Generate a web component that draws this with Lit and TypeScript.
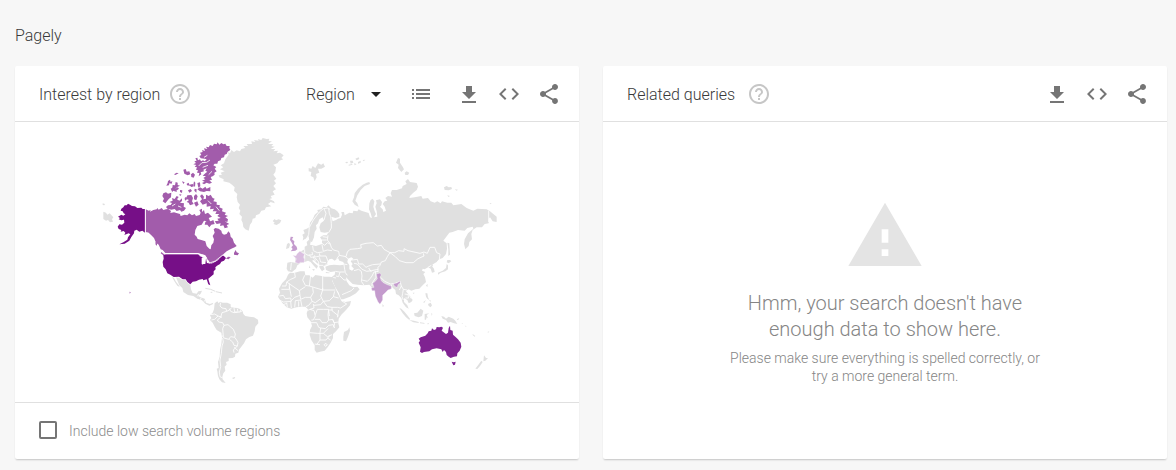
import { LitElement, html, css, svg } from "lit";
import { customElement, property } from "lit/decorators.js";

const ICONS: Record<string, string> = {
  help: "M11 18h2v-2h-2v2zm1-16C6.48 2 2 6.48 2 12s4.48 10 10 10 10-4.48 10-10S17.52 2 12 2zm0 18c-4.41 0-8-3.59-8-8s3.59-8 8-8 8 3.59 8 8-3.59 8-8 8zm0-14c-2.21 0-4 1.79-4 4h2c0-1.1.9-2 2-2s2 .9 2 2c0 2-3 1.75-3 5h2c0-2.25 3-2.5 3-5 0-2.21-1.79-4-4-4z",
  list: "M3 13h2v-2H3v2zm0 4h2v-2H3v2zm0-8h2V7H3v2zm4 4h14v-2H7v2zm0 4h14v-2H7v2zM7 7v2h14V7H7z",
  download: "M19 10h-4V4H9v6H5l7 7 7-7zM5 19v2h14v-2H5z",
  code: "M9.4 16.6L4.8 12l4.6-4.6L8 6l-6 6 6 6 1.4-1.4zm5.2 0l4.6-4.6-4.6-4.6L16 6l6 6-6 6-1.4-1.4z",
  share: "M18 16.08c-.76 0-1.44.3-1.96.77L8.91 12.7c.05-.23.09-.46.09-.7s-.04-.47-.09-.7l7.05-4.11c.54.5 1.25.81 2.04.81 1.66 0 3-1.34 3-3s-1.34-3-3-3-3 1.34-3 3c0 .24.04.47.09.7L8.04 9.81C7.5 9.31 6.79 9 6 9c-1.66 0-3 1.34-3 3s1.34 3 3 3c.79 0 1.5-.31 2.04-.81l7.12 4.16c-.05.21-.08.43-.08.65 0 1.61 1.31 2.92 2.92 2.92s2.92-1.31 2.92-2.92-1.31-2.92-2.92-2.92z",
  warning: "M1 21h22L12 2 1 21zm12-3h-2v-2h2v2zm0-4h-2v-4h2v4z",
};

const icon = (name: string) =>
  html`<svg class="icon" viewBox="0 0 24 24" aria-hidden="true"><path d=${ICONS[name]}></path></svg>`;

@customElement("world-map")
class WorldMap extends LitElement {
  static styles = css`
    :host { display: block; width: 100%; max-width: 426px; }
    svg { display: block; width: 100%; }
    .land { fill: #e0e0e0; }
    .alaska, .usa { fill: #760f87; }
    .canada { fill: #a25cab; }
    .australia { fill: #7f2391; }
    .uk, .india { fill: #c49bcd; }
    .france { fill: #dabfe0; }
    .border { fill: none; stroke: #fff; stroke-width: 2.5; stroke-linejoin: round; }
    .thin { fill: none; stroke: #e0e0e0; stroke-width: 3; }
    .sea { fill: #fff; }
  `;

  render() {
    return html`
      <svg viewBox="-48 0 1278 780" role="img" aria-label="Interest by region, world map">
        ${this.northAmerica()} ${this.southAmerica()} ${this.eurasia()} ${this.africaOceania()}
      </svg>
    `;
  }

  private northAmerica() {
    return svg`
      <path class="alaska" d="M135 237L128 237 124 233 112 234 105 229 96 228 90 224 84 221 80 226 74 226 70 232 64 236 62 242 68 244 71 250 76 253 70 257 64 254 54 260 60 264 56 268 64 271 72 269 73 278 66 284 58 283 53 290 56 297 64 300 62 305 71 303 76 308 73 315 86 310 91 313 84 322 82 329 70 337 58 343 74 341 88 332 94 321 102 310 103 302 110 299 118 305 127 302 135 308Z"/>
      <path class="land" d="M10 245L18 248 22 254 29 250 40 262 36 268 39 275 30 277 24 270 18 272 10 267ZM8 220l7 2-2 4-5-1Z"/>
      <path class="canada" d="M137 238L146 242 152 240 150 245 160 240 170 238 172 234 176 239 185 234 190 240 198 238 205 237 213 243 211 249 222 247 232 250 240 252 242 258 254 254 262 256 268 250 276 256 284 252 288 258 299 255 302 248 298 240 306 236 306 246 312 240 315 252 324 248 330 254 336 260 326 264 330 272 320 274 312 272 305 284 292 288 286 300 284 314 290 320 293 327 304 330 316 334 320 348 328 356 332 358 334 346 340 338 342 328 338 318 344 308 341 298 346 294 356 296 364 302 366 310 372 314 380 312 385 304 390 310 392 320 398 326 402 338 410 348 404 352 394 356 380 364 370 373 358 388 346 393 332 402 326 392 318 380 304 372 294 369 196 369 188 360 182 358 176 344 168 338 162 324 154 316 146 308 137 307Z"/>
      <path class="canada" d="M402 369L407 360 410 367 417 370 413 376 402 374ZM378 386L384 380 392 381 386 388ZM184 366l12 10-4 1-10-7ZM166 336l5 4 0 7-4-3Z"/>
      <path class="canada" d="M300 68L308 66 306 60 315 63 312 55 322 57 318 50 326 52 330 45 338 48 342 41 350 43 353 37 358 44 364 39 370 43 376 41 380 48 389 48 388 54 391 60 383 65 380 72 374 74 372 82 364 84 362 91 354 94 352 101 344 101 340 106 349 111 344 116 350 124 343 128 344 134 338 139 332 141 336 150 328 151 336 158 328 161 320 158 312 163 306 159 314 155 306 152 316 148 310 144 318 139 308 137 316 130 322 125 316 122 320 115 310 119 312 124 302 127 304 133 296 139 298 129 291 128 294 121 288 119 291 112 284 110 289 105 280 103 288 99 283 94 290 92 286 85 292 83 294 91 300 88 303 94 309 91 314 94 320 88 314 86 302 85 298 78 304 75Z"/>
      <path class="canada" d="M190 190L198 187 204 191 214 188 213 202 207 206 202 212 196 220 188 214 192 206 187 198ZM198 231L204 226 212 225 216 219 208 216 218 212 216 204 224 207 230 198 236 201 231 208 238 212 246 205 246 213 240 218 252 220 251 230 258 234 252 242 244 245 240 240 230 243 224 237 214 239 202 236ZM262 196L274 195 279 204 276 214 281 222 270 226 266 218 260 216 267 210 258 206ZM282 198l6-6 5 7-4 12-7-3ZM282 218l10-4 4 10-8 6ZM300 198L306 193 312 200 310 208 318 206 318 194 326 198 332 194 338 204 344 206 340 214 350 216 350 224 360 226 358 232 368 236 366 244 378 248 374 254 384 258 376 262 384 268 382 276 374 274 388 282 380 285 384 292 374 295 370 286 360 288 362 280 350 282 344 274 356 272 352 266 362 264 352 258 358 252 346 252 350 244 338 244 342 236 330 238 332 228 320 230 320 220 308 224 300 214 306 208ZM316 276L324 270 332 274 340 270 344 282 334 284 328 292 322 284 314 284Z"/>
      <path class="canada" d="M292 178L300 172 308 176 316 170 320 176 331 171 331 184 320 183 312 186 300 184ZM292 159l8-2 1 12-6 4ZM250 119l7-2 3 8 8-1 3 9-8 3-10-5ZM273 133l6-5 6 6-4 9-7-2ZM222 133l8-5 6 2-10 5ZM204 153l6-4 2 7 5-3-2 8-7-1-1 6-8 1 4-8ZM218 165l7 1 2-10 6 2 0 7 7 2-8 4-7 6-8-3ZM212 176l5-3 8 4 8-5 4 4-8 6 2 4-12-4-2 5ZM240 180l7 1-1 8-6-3ZM260 161l6-3 2 6 10-2 4 7-8 2-4-4-9-1ZM282 154l4 4-1 14-5-8ZM264 181l8-4 4 6-8 5ZM284 176l6 2-1 10-6-6ZM254 204l5-4 2 8-6 4ZM246 154l8 3-4 5ZM238 192l7 2-5 4Z"/>
      <path class="usa" d="M197 373L294 373 304 377 313 381 306 384 308 402 316 402 318 386 322 388 324 398 334 401 346 395 356 389 366 378 371 377 378 384 372 392 364 395 360 402 351 407 346 412 347 418 341 424 341 433 332 440 325 446 327 454 331 466 325 463 320 448 310 451 308 447 297 449 288 454 278 455 271 463 262 456 257 448 248 448 237 440 221 441 211 434 202 430 197 418 190 410 188 396 191 386 190 376Z"/>
      <path class="usa" opacity=".5" d="M88 485l5 2-4 4Z"/>
      <path class="sea" d="M296 377l12-4 8 3 5 8-8-1-7-2ZM305 384l5-2 4 6-5 16-4-2ZM318 386l6 4 1 8-4 2Z"/>
      <path class="border" d="M136 236V308L146 310M192 371H294L304 376M326 400L346 393 368 375"/>
      <path class="border" d="M296 108L306 98 320 97 330 90M322 76L312 82M308 112L324 106M326 134L336 124M276 244L290 250M216 228L226 222M234 228L244 232M324 212L334 222M348 230L358 242"/>
      <path class="land" d="M386 74L384 66 390 70 394 60 402 66 410 61 420 64 424 57 436 54 430 48 444 48 440 42 456 42 454 34 466 36 462 30 476 32 474 27 484 30 488 24 500 27 508 26 506 33 516 34 504 42 520 42 514 48 524 50 512 57 526 57 520 64 534 62 530 70 540 68 551 76 544 84 550 88 538 92 532 100 520 104 528 112 526 126 520 134 529 146 522 152 528 160 520 168 528 178 518 184 524 194 512 198 516 205 508 207 522 214 524 220 512 216 504 222 514 229 498 232 494 240 484 242 478 252 468 256 466 264 458 266 456 276 450 284 446 302 436 298 430 291 428 278 424 270 426 260 418 252 421 242 416 234 420 224 413 216 410 202 412 192 402 182 404 172 396 164 388 158 370 154 371 148 358 142 356 136 366 134 362 128 374 124 360 118 370 112 362 106 372 100 376 88ZM518 273L524 267 528 271 536 268 544 271 540 279 530 285 520 282 524 278Z"/>
      <path class="land" d="M228 442L236 443 248 450 256 450 262 458 271 465 273 478 278 489 290 491 295 484 306 482 302 491 294 498 302 502 314 506 318 518 330 522 340 518 338 523 328 527 316 521 306 511 292 506 280 498 264 495 250 486 247 474 238 466ZM216 441L222 444 228 455 236 465 239 471 232 467 224 455Z"/>
      <path class="thin" d="M316 475L332 478 346 484M348 485L366 489M332 487h5"/>
      <path class="border" d="M292 499l4-7M304 502l-3 7M316 509l-4 6"/>`;
  }

  private southAmerica() {
    return svg`
      <g transform="translate(0 330)">
        <path class="land" d="M344 190L352 184 356 190 360 185 368 188 382 188 392 193 392 200 402 203 412 204 422 208 428 214 430 222 436 228 448 230 462 232 474 239 475 250 466 260 464 274 459 287 448 291 438 298 432 310 424 320 417 329 415 338 406 341 405 350 398 354 386 355 386 363 378 366 380 374 374 380 376 392 370 400 367 410 368 418 377 429 366 427 358 418 354 408 352 394 350 386 356 384 354 366 359 350 360 330 364 312 366 292 364 278 350 270 344 260 338 248 330 240 334 234 330 226 338 218 342 208ZM396 414l8-3 2 3-6 3Z"/>
        <path class="border" d="M362 188L360 198 366 204 378 206 380 214 366 218 362 232 352 240 356 246 368 248 372 256 384 254 400 268 406 282 404 292 392 290 386 298 372 294 366 286M332 224L344 222 354 228 344 238 334 240M380 214L388 210 396 202M402 204L404 216 412 216M412 206L414 216M422 208L420 216M388 206L392 214 402 218 420 216 428 212M354 228L366 232M368 294L370 306 366 318 364 340 360 360 362 380 358 396 360 410 368 414M372 256L368 266 370 290M404 292L410 300 414 308 412 318 402 316 398 306 388 298M412 318L400 330 402 338M402 322L414 332"/>
      </g>`;
  }

  private eurasia() {
    return svg`
      <g transform="translate(510 30)">
        <path class="land" d="M98 302L100 292 97 284 104 280 100 270 110 266 118 262 120 248 128 238 134 224 144 216 142 210 154 208 160 200 170 202 175 196 184 205 194 208 202 214 208 222 208 231 196 234 184 230 188 244 198 240 204 236 212 234 216 224 214 216 222 216 224 226 238 218 248 220 250 212 262 214 266 208 274 212 284 215 296 219 300 232 306 234 302 220 297 208 298 190 302 180 308 176 313 184 310 200 314 214 318 222 312 232 322 230 320 214 316 200 320 190 318 181 330 178 336 186 334 196 330 200 338 208 340 216 348 212 344 200 338 192 344 184 352 182 346 174 354 168 366 170 362 160 366 150 380 150 396 145 398 138 410 132 406 124 414 117 420 126 440 129 444 140 440 150 430 158 420 168 418 174 434 172 454 168 458 176 474 174 482 184 494 188 502 184 512 190 516 184 532 188 544 188 550 196 574 192 590 204 610 212 622 206 650 208 660 214 680 230 680 246 668 244 660 232 656 236 656 250 644 252 636 262 620 262 608 270 604 282 606 298 598 306 596 318 586 328 582 312 584 298 594 280 610 266 608 260 592 264 584 272 564 270 548 276 538 278 520 302 530 310 531 326 528 342 518 354 508 358 500 366 490 372 484 376 492 386 494 396 486 398 482 386 474 382 464 388 458 386 456 392 466 396 460 402 465 412 468 426 458 436 448 446 436 448 424 452 416 448 408 454 420 468 428 480 424 486 416 490 412 480 402 474 402 486 412 496 416 506 408 502 398 488 394 474 386 466 378 462 376 450 366 442 362 448 334 450 308 450 304 440 298 434 280 436 262 434 248 432 238 422 228 412 230 424 238 436 250 442 262 440 269 448 258 460 240 470 220 478 213 478 206 458 196 442 188 424 186 410 194 404 196 394 182 396 168 390 166 380 178 376 192 374 210 376 222 374 220 366 208 362 204 354 194 362 186 356 178 358 172 366 172 374 160 378 164 388 156 394 148 382 148 374 140 368 132 360 126 362 134 370 144 378 140 386 132 378 122 366 114 362 104 366 92 370 82 376 78 386 66 396 54 394 50 386 52 368 62 366 76 368 76 350 84 344 96 332 104 328 104 320 112 316 110 306 116 300 122 306 120 314 138 318 156 312 156 300 150 292 160 286 170 286 176 276 164 278 152 276 148 262 152 250 162 242 158 232 148 238 144 250 138 256 140 266 134 276 132 292 126 306 118 304 116 288 110 294Z"/>
        <path class="sea" d="M234 356L244 352 250 356 242 364 248 372 244 378 252 386 246 392 238 388 238 376 232 366Z"/>
        <path class="land" d="M298 126L290 128 278 134 264 146 254 160 252 172 247 184 254 194 266 201 262 190 256 182 262 166 272 150 284 138 300 132ZM116 84L124 86 128 78 136 84 144 70 154 74 160 70 165 80 154 86 144 86 148 98 138 102 140 112 134 124 130 112 122 108 124 96 116 94ZM378 68L384 54 390 56 390 68 398 80 402 88 394 96 384 84 386 74ZM404 98l6-4 8 4-4 7-8 0ZM522 142l8-4 6 4 8-1 2 6-10 4-12-1ZM554 148l10 1-4 3ZM532 166l8 2-5 3ZM658 190l6-1-1 4ZM226 66l6-1 2 4-6 1ZM240 62l8 0 2 6-8 3ZM236 74l10-2 2 2-12 3ZM256 56l10-4 2 5-8 4ZM264 66l8-4 0 6-8 3ZM278 60l8-1-5 5ZM252 70l8 2-6 4ZM532 308l6 2 2 34-5 4 0-20ZM532 360l8 0 4 4-8 6-6-3ZM530 372l4 4 0 12-8 6-14 4-8 6 0-6 14-6 10-8ZM480 374l5-4 4 6-4 6ZM51 312L57 308 60 314 57 324 48 327ZM126 388l8-1-2 6ZM118 376l3 8-4 0ZM168 396l12 2-3 2-10-1ZM200 396l9-2-4 4Z"/>
        <path class="uk" d="M62 290L70 291 66 298 73 304 72 312 80 320 82 328 76 332 62 334 68 327 64 322 69 316 64 306 60 300Z"/>
        <path class="border" d="M98 302L108 298 116 284 118 262 130 240 148 216 160 206M162 206L168 220 162 240M160 206L174 204 180 208M176 206L178 220 182 230 184 250 184 264 176 278M174 286L172 300 180 310 184 322 190 330 206 334 208 346 200 356M156 300L170 300M158 290L172 292M156 310L164 316 172 308 180 312M156 314L160 334 172 330 186 332M128 318L130 332 142 338 158 336M104 328L104 340 114 346 128 344 126 336M118 344L122 352 140 350 150 348 148 340M98 336L104 344 104 356 100 366 106 368M150 348L168 348 174 364M148 352L152 366 168 368M134 352L146 366 146 376 160 376M64 368L62 390M78 366L98 372M134 346L130 354 138 362M166 376L172 370"/>
        <path class="border" d="M208 346L228 350 232 336 240 328 262 326 274 324 272 314 288 310 310 308 322 318 334 316 342 328 360 338 374 338 386 332 402 334 402 326 414 332 432 336 450 340 462 336 472 340 480 322 494 322 500 338 510 342 508 358 502 366M360 338L352 350 346 362 334 366 330 376 324 382 324 396M360 338L376 350 388 362 408 368 430 368 444 356 462 348 460 340M234 356L226 350M246 360L262 358 266 372 278 372 288 382 296 378 308 374 330 372M252 370L262 372 276 388 290 394 304 392 324 388M252 392L266 388 274 394 276 408 274 424 282 436M276 420L292 424 300 416 306 408 312 396 324 394M222 374L224 388 226 398 232 406M196 394L208 396 224 396M210 396L206 410 198 408M210 408L222 420 230 420M216 464L230 458 244 452 252 444M188 412L198 414M332 412L344 424 362 432 376 430 390 424 394 438 400 448M364 434L366 444M394 438L388 450M400 448L398 460 396 470 400 480M400 448L412 450 416 464 424 476M404 462L414 464 416 474 406 474M212 366L222 372 232 374M484 376L474 382M304 396L296 384M316 394L318 412 306 430 306 438M656 212L656 246"/>
        <path class="india" stroke="#fff" stroke-width="1" d="M319 402L330 399 334 405 330 411 334 422 340 428 352 434 364 438 364 446 354 450 346 458 338 466 338 480 330 493 324 486 316 468 314 452 306 452 304 444 312 442 308 430 316 424 322 416ZM370 431L380 429 390 423 391 428 384 434 382 442 376 440 372 436Z"/>
        <path class="land" d="M337 492l5 6-4 3Z"/>
        <path class="france" stroke="#fff" stroke-width="1" d="M68 346L78 347 81 341 90 333 97 339 104 342 100 352 104 358 102 368 92 367 86 371 75 367 79 356Z"/>
      </g>`;
  }

  private africaOceania() {
    return svg`
      <g transform="translate(510 330)">
        <path class="land" d="M54 104L60 98 72 99 90 94 104 94 106 106 118 106 128 113 136 105 150 107 164 110 178 110 190 112 190 120 186 122 194 138 200 154 206 166 214 182 226 186 243 183 240 196 228 210 214 224 206 236 205 250 208 262 198 274 189 282 189 294 182 308 174 320 164 332 150 335 140 338 134 330 134 316 124 300 119 284 120 270 126 258 122 244 112 232 110 220 114 208 106 200 94 200 80 202 64 206 50 202 40 192 30 180 24 170 30 158 27 146 36 130 48 118ZM222 276L234 270 238 262 240 272 234 290 228 304 220 302 220 290Z"/>
        <path class="border" d="M74 99L76 112 62 118 50 126 48 138 36 138M50 126L88 152M104 106L98 120 106 136 118 138 158 150 158 144M118 138L122 106M158 108V150L196 150M34 148H58V130M28 168L40 166 46 176 62 174 64 184 40 186 28 180M58 140L64 170M88 152L90 166 74 172 64 182M88 152L106 140M90 166L92 178 106 172 122 172 130 158 128 142M122 172L126 184 116 196 108 200M76 182L92 180 96 200M76 182L74 202M86 184V200M62 184L64 204M50 188L52 202M158 150L152 168 160 184 178 182 190 170 194 154M126 184L136 188 152 176M130 192L132 204 120 208 112 212M132 196L152 194 160 184M120 208L132 212 136 228 130 240 124 240M142 208L160 208 176 208 174 224 176 240 170 248 156 248 150 238 134 238M142 208L136 224M160 184L172 200 186 202 202 202 212 204 230 192 214 182M190 170L206 174M186 202V212L206 228M176 210H188M176 240L188 238 192 248 206 246M120 278L142 280 160 280M122 248H140L146 262 152 264 150 278M152 264L166 266 176 256 190 254 194 264M160 280L174 266M150 278V300L140 314M150 300L168 300 180 286M160 280L172 290 186 284M134 312L150 314M172 294L182 300M162 314l6-4 4 5-6 4ZM178 228L176 212M40 194L50 190M188 238L194 252 190 262M206 210L202 232"/>
        <path class="land" d="M388 204L394 206 404 216 412 226 420 236 418 240 408 232 398 220ZM418 240L432 242 446 246 446 249 430 247ZM450 247l14 2-1 2-13-1ZM470 252l8-4-3 5ZM432 220L442 218 452 206 460 212 456 228 446 232 434 228ZM464 222l14-2-8 5 4 10-4-3-2 7-4 0ZM484 218l3 4-2 6ZM514 228L522 230 528 236 536 230 550 236 556 242 562 252 552 250 542 246 534 248 528 240 518 236ZM560 238l8-4-4 7ZM466 160l6 0 2 12 4 8-6-4-4-6ZM474 192l8-4 4 8-4 6-6-4ZM478 180l4 1-1 6ZM460 186l8-6-6 10ZM468 136l5-4-1 10ZM428 158l6 0-3 4ZM574 248l6 4-3 0ZM584 256l6 4-3 0ZM608 282l8 6-2 2-6-5ZM652 276l6-2-3 4ZM642 346L648 354 654 354 646 362 640 364ZM634 362L638 366 630 378 622 387 616 386 624 376Z"/>
        <path class="australia" d="M446 296L452 292 466 287 473 280 476 274 484 272 486 265 492 270 498 268 500 261 508 262 514 260 519 263 515 272 528 282 534 278 536 264 540 257 541 270 548 272 549 284 556 290 564 298 572 308 574 320 569 332 562 340 561 349 552 350 542 354 536 350 530 345 528 336 522 330 518 336 514 328 500 325 486 328 478 334 462 336 456 339 450 335 452 322 446 308 450 302ZM545 365L551 367 557 365 555 374 550 376Z"/>
      </g>`;
  }
}

@customElement("trend-widget")
class TrendWidget extends LitElement {
  @property() heading = "";

  static styles = css`
    :host {
      display: flex;
      flex-direction: column;
      min-width: 0;
      background: #fff;
      border-radius: 2px;
      box-shadow: 0 2px 2px -1px rgba(0, 0, 0, 0.16), 0 1px 2px rgba(0, 0, 0, 0.06);
    }
    .header {
      display: flex;
      align-items: center;
      height: 55px;
      padding: 0 18px 0 24px;
      border-bottom: 1px solid #e0e0e0;
    }
    h2 { margin: 0; padding-top: 2px; font-size: 16px; font-weight: 300; line-height: 24px; }
    .icon { display: block; width: 24px; height: 24px; fill: currentColor; }
    button { padding: 0; border: 0; background: none; color: #757575; cursor: pointer; }
    .help { margin-left: var(--help-gap, 8px); color: #c6c6c6; }
    .actions { display: flex; align-items: center; gap: 16px; margin-left: auto; }
  `;

  render() {
    return html`
      <div class="header">
        <h2>${this.heading}</h2>
        <button class="help" aria-label="Help">${icon("help")}</button>
        <div class="actions">
          <slot name="controls"></slot>
          <button aria-label="Download CSV">${icon("download")}</button>
          <button aria-label="Embed">${icon("code")}</button>
          <button aria-label="Share">${icon("share")}</button>
        </div>
      </div>
      <slot></slot>
    `;
  }
}

@customElement("app-root")
class AppRoot extends LitElement {
  static styles = css`
    :host {
      display: block;
      box-sizing: border-box;
      min-height: 100vh;
      padding: 24px 9px 11px 15px;
      background: #f7f7f7;
      color: #3a3a3a;
      font-family: Roboto, sans-serif;
      font-weight: 300;
    }
    h1 { margin: 0 0 18px; font-size: 16px; font-weight: 300; line-height: 24px; }
    .widgets { display: grid; grid-template-columns: 1fr 1fr; gap: 24px; }
    .queries { --help-gap: 12px; }
    .controls { display: flex; align-items: center; gap: 24px; margin-right: 8px; }
    .picker { display: grid; align-items: center; }
    .picker select, .picker svg { grid-area: 1 / 1; }
    .picker select {
      width: 79px;
      padding: 2px 0 0;
      border: 0;
      background: none;
      color: inherit;
      font: inherit;
      font-size: 16px;
      line-height: 24px;
      appearance: none;
    }
    .picker svg { justify-self: end; width: 24px; height: 24px; pointer-events: none; margin-right: -3px; fill: #212121; }
    .toggle { padding: 0; border: 0; background: none; color: #757575; }
    .icon { display: block; width: 24px; height: 24px; fill: currentColor; }
    .map { display: flex; justify-content: center; padding: 8px 0 12px; }
    .footer {
      display: flex;
      align-items: center;
      gap: 12px;
      height: 54px;
      padding: 0 24px;
      border-top: 1px solid #e0e0e0;
      color: #8c8c8c;
      font-size: 14px;
    }
    .footer label { padding-top: 2px; }
    .footer input {
      width: 18px;
      height: 18px;
      margin: 0;
      border: 2px solid #757575;
      border-radius: 2px;
      appearance: none;
    }
    .footer input:checked { background: #757575; }
    .empty {
      display: flex;
      flex: 1;
      flex-direction: column;
      align-items: center;
      padding: 74px 24px;
      color: #858585;
      text-align: center;
    }
    .empty .icon { width: 80px; height: 80px; fill: #e4e4e4; }
    .message { max-width: 320px; margin: 14px 0 7px; font-size: 20px; line-height: 26px; }
    .hint { max-width: 320px; margin: 0; font-size: 14px; line-height: 18px; }
  `;

  render() {
    return html`
      <h1>Pagely</h1>
      <main class="widgets">
        <trend-widget heading="Interest by region">
          <div class="controls" slot="controls">
            <div class="picker">
              <select aria-label="Resolution">
                <option>Region</option>
                <option>City</option>
              </select>
              <svg viewBox="0 0 24 24" aria-hidden="true"><path d="M7 10l5 5 5-5z"></path></svg>
            </div>
            <button class="toggle" aria-label="Show as list">${icon("list")}</button>
          </div>
          <div class="map"><world-map></world-map></div>
          <div class="footer">
            <input type="checkbox" id="low-volume" />
            <label for="low-volume">Include low search volume regions</label>
          </div>
        </trend-widget>
        <trend-widget class="queries" heading="Related queries">
          <div class="empty">
            ${icon("warning")}
            <p class="message">Hmm, your search doesn't have<br />enough data to show here.</p>
            <p class="hint">Please make sure everything is spelled correctly, or<br />try a more general term.</p>
          </div>
        </trend-widget>
      </main>
    `;
  }
}
